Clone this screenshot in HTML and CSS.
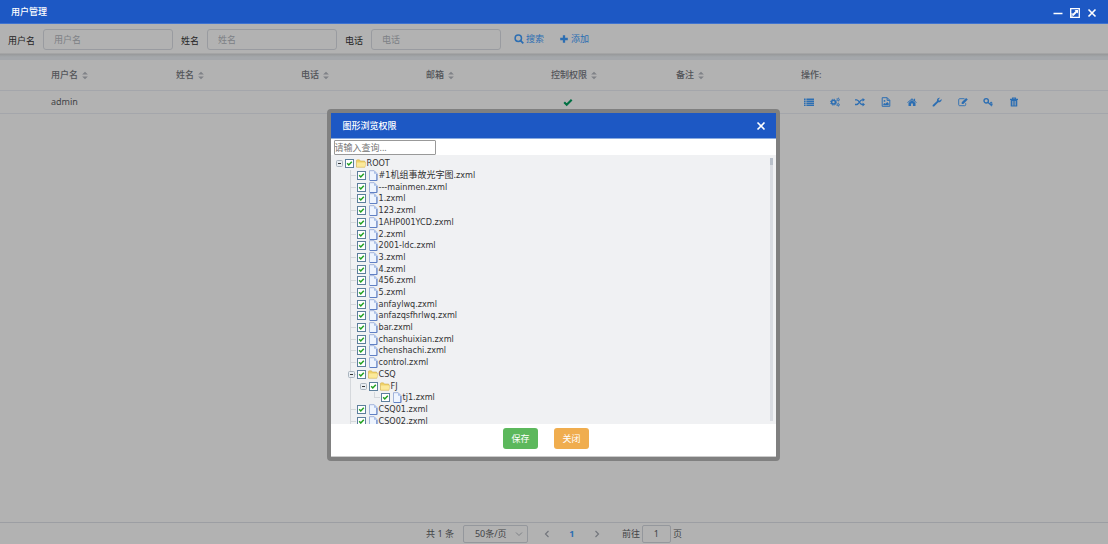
FILE: index.html
```html
<!DOCTYPE html>
<html lang="zh-CN">
<head>
<meta charset="utf-8">
<title>用户管理</title>
<link rel="stylesheet" href="styles.css">
</head>
<body>
<svg class="sprite" aria-hidden="true">
  <symbol id="i-file" viewBox="0 0 10 11"><path d="M1.500.7h4.700l2.800 2.900v6.900H1.500z" fill="#eef4fe" stroke="#8da3d3" stroke-width=".8"/><path d="M8.900 4v6.500H2" fill="none" stroke="#5f7fc4" stroke-width="1"/><path d="M6 .8v3h3z" fill="#a9c0ea"/></symbol>
  <symbol id="i-folder" viewBox="0 0 11 10"><path d="M.5 9V1.800q0-.8.8-.8h2.500l1 1.300h4.700v1.200h.9L9.800 9z" fill="#f0d268" stroke="#d4b252" stroke-width=".7"/><path d="M1 8.500V4h9.500l-.8 4.500z" fill="#fbe99b"/></symbol>
  <symbol id="i-minus" viewBox="0 0 9 9"><rect x="1.500" y="1.500" width="6" height="6" rx="1" fill="#e8edf2" stroke="#a9b4be"/><path d="M3 4.500h3" stroke="#333"/></symbol>
  <symbol id="i-sort" viewBox="0 0 8 10"><path d="M4 .8 7.200 4H.8zM4 9.200 7.200 6H.8z" fill="#b7bac2"/></symbol>
  <symbol id="i-close" viewBox="0 0 10 10"><path d="m1.500 1.500 7 7m0-7-7 7" stroke="currentColor" stroke-width="1.600"/></symbol>
</svg>
<div class="app">
  <header class="titlebar">
    <h1>用户管理</h1>
    <div class="window-actions">
      <button aria-label="最小化"><svg viewBox="0 0 10 10"><path d="M.5 5.500h9" stroke="currentColor" stroke-width="1.500"/></svg></button>
      <button aria-label="最大化"><svg viewBox="0 0 10 10"><path d="M.7.7h8.600v8.600H.7z" fill="none" stroke="currentColor" stroke-width="1.300"/><path d="M4.500 2H8v3.500L6.900 4.400 3.400 7.900 2.100 6.600l3.500-3.500z" fill="currentColor"/><path d="M1 5h2v4H1z" fill="currentColor" opacity=".5"/></svg></button>
      <button aria-label="关闭窗口"><svg><use href="#i-close"/></svg></button>
    </div>
  </header>

  <main class="page">
    <form class="filters">
      <div class="field"><label for="user">用户名</label><input id="user" placeholder="用户名"></div>
      <div class="field"><label for="name">姓名</label><input id="name" placeholder="姓名"></div>
      <div class="field"><label for="phone">电话</label><input id="phone" placeholder="电话"></div>
      <button type="button" class="link"><svg viewBox="0 0 10 10"><circle cx="4.300" cy="4.300" r="3.200" fill="none" stroke="currentColor" stroke-width="1.500"/><path d="m6.600 6.600 2.700 2.700" stroke="currentColor" stroke-width="1.800"/></svg>搜索</button>
      <button type="button" class="link"><svg viewBox="0 0 10 10"><path d="M5 1.200v7.600M1.200 5h7.600" stroke="currentColor" stroke-width="2.300"/></svg>添加</button>
    </form>

    <table class="users">
      <colgroup><col class="c-index"><col class="c-data"><col class="c-data"><col class="c-data"><col class="c-data"><col class="c-data"><col class="c-data"><col></colgroup>
      <thead><tr>
        <th></th>
        <th>用户名<svg class="sort"><use href="#i-sort"/></svg></th>
        <th>姓名<svg class="sort"><use href="#i-sort"/></svg></th>
        <th>电话<svg class="sort"><use href="#i-sort"/></svg></th>
        <th>邮箱<svg class="sort"><use href="#i-sort"/></svg></th>
        <th>控制权限<svg class="sort"><use href="#i-sort"/></svg></th>
        <th>备注<svg class="sort"><use href="#i-sort"/></svg></th>
        <th>操作:</th>
      </tr></thead>
      <tbody><tr>
        <td></td><td>admin</td><td></td><td></td><td></td>
        <td><svg class="granted" viewBox="0 0 10 10"><path d="m1.200 5.200 2.500 2.500 5-5" fill="none" stroke="currentColor" stroke-width="2.100"/></svg></td>
        <td></td>
        <td><div class="actions">
          <button aria-label="列表"><svg viewBox="0 0 10 10"><path d="M0 1.500h1.600V3H0zm2.400 0H10V3H2.400zM0 3.500h1.600V5H0zm2.400 0H10V5H2.400zM0 5.500h1.600V7H0zm2.400 0H10V7H2.400zM0 7.500h1.600V9H0zm2.400 0H10V9H2.400z" fill="currentColor"/></svg></button>
          <button aria-label="设置"><svg viewBox="0 0 10 10" fill="none" stroke="currentColor"><circle cx="3.500" cy="5.200" r="1.900" stroke-width="1.500"/><circle cx="3.500" cy="5.200" r="3" stroke-width="1" stroke-dasharray="1.200 1.156"/><circle cx="8.200" cy="2.600" r="1" stroke-width=".9"/><circle cx="8.200" cy="7.700" r="1" stroke-width=".9"/><circle cx="8.200" cy="2.600" r="1.700" stroke-width=".6" stroke-dasharray=".9 .88"/><circle cx="8.200" cy="7.700" r="1.700" stroke-width=".6" stroke-dasharray=".9 .88"/></svg></button>
          <button aria-label="切换"><svg viewBox="0 0 10 10"><path d="M0 2.800h1.700c2.400 0 3 4.700 5.300 4.700h1M0 7.500h1.700C4.100 7.500 4.700 2.800 7 2.800h1" fill="none" stroke="currentColor" stroke-width="1.300"/><path d="M7.600.9 10 2.800 7.600 4.700zm0 4.700L10 7.500 7.600 9.400z" fill="currentColor"/></svg></button>
          <button aria-label="图形浏览权限"><svg viewBox="0 0 10 10"><path d="M1.200.7h5l2.600 2.600v6H1.200zM6.100.7v2.700h2.700" fill="none" stroke="currentColor"/><path d="M2.300 8.300V7l1.200-1.100.9.900 1.800-1.900 1.500 1.600v1.800z" fill="currentColor"/><circle cx="3.500" cy="3.900" r=".9" fill="currentColor"/></svg></button>
          <button aria-label="主页"><svg viewBox="0 0 10 10"><path d="M5 1.200 6.900 2.900V1.700h1.200v2.200L9.800 5.500l-.5.600L5 2.400.7 6.100l-.5-.6z" fill="currentColor"/><path d="M5 3.100 8.500 6v3H5.900V6.600H4.100V9H1.500V6z" fill="currentColor"/></svg></button>
          <button aria-label="维护"><svg viewBox="0 0 10 10"><path d="M.8 8.100 5 3.900C4.600 1.900 6.300.3 8.200.8L6.600 2.300l.2 1.100 1.100.2 1.600-1.500c.6 1.900-1.200 3.700-3.200 3.200L2.100 9.400C1.200 10.100.1 9 .8 8.100z" fill="currentColor"/></svg></button>
          <button aria-label="编辑"><svg viewBox="0 0 10 10"><path d="M6.500 1.700H1.700q-1 0-1 1v5q0 1 1 1h5q1 0 1-1V6.200" fill="none" stroke="currentColor" stroke-width=".9"/><path d="M3.700 7V5.300L8.100.9l1.700 1.700L5.400 7z" fill="currentColor"/></svg></button>
          <button aria-label="密钥"><svg viewBox="0 0 10 10"><circle cx="3.200" cy="3.800" r="2.200" fill="none" stroke="currentColor" stroke-width="1.400"/><path d="m4.800 5.200 4.300 3.900M6.600 6.900l1.500-1.500 1.100 1M8 8l1.500-1" fill="none" stroke="currentColor" stroke-width="1.200"/></svg></button>
          <button aria-label="删除"><svg viewBox="0 0 10 10"><path d="M3.500 2V1h3v1M1 2.400h8" fill="none" stroke="currentColor" stroke-width="1.100"/><path fill-rule="evenodd" d="M1.700 3h6.600v6q0 .6-.6.600H2.300q-.6 0-.6-.6zm1.500 1.100v4.300h.6V4.100zm1.500 0v4.300h.6V4.100zm1.500 0v4.300h.6V4.100z" fill="currentColor"/></svg></button>
        </div></td>
      </tr></tbody>
    </table>

    <footer class="pager">
      <span>共 1 条</span>
      <span class="size"><select aria-label="每页条数"><option>50条/页</option></select><svg viewBox="0 0 10 10"><path d="m2 3.500 3 3 3-3" fill="none" stroke="#b4b8c0"/></svg></span>
      <nav aria-label="分页">
        <button aria-label="上一页"><svg viewBox="0 0 10 10"><path d="M6.500 2 3.500 5l3 3" fill="none" stroke="#a5a9b2" stroke-width="1.200"/></svg></button>
        <button class="current">1</button>
        <button aria-label="下一页"><svg viewBox="0 0 10 10"><path d="m3.500 2 3 3-3 3" fill="none" stroke="#a5a9b2" stroke-width="1.200"/></svg></button>
      </nav>
      <label class="jump">前往<input value="1">页</label>
    </footer>

    <div class="overlay">
      <section class="dialog" role="dialog" aria-labelledby="dialog-title">
        <header><h2 id="dialog-title">图形浏览权限</h2><button aria-label="关闭对话框"><svg><use href="#i-close"/></svg></button></header>
        <div class="search"><input aria-label="查询" placeholder="请输入查询..."></div>
        <div class="tree-wrap">
          <ul class="tree">
            <li><button aria-label="折叠"><svg><use href="#i-minus"/></svg></button><label><input type="checkbox" checked><svg><use href="#i-folder"/></svg>ROOT</label></li>
            <li class="l1"><label><input type="checkbox" checked><svg><use href="#i-file"/></svg>#1机组事故光字图.zxml</label></li>
            <li class="l1"><label><input type="checkbox" checked><svg><use href="#i-file"/></svg>---mainmen.zxml</label></li>
            <li class="l1"><label><input type="checkbox" checked><svg><use href="#i-file"/></svg>1.zxml</label></li>
            <li class="l1"><label><input type="checkbox" checked><svg><use href="#i-file"/></svg>123.zxml</label></li>
            <li class="l1"><label><input type="checkbox" checked><svg><use href="#i-file"/></svg>1AHP001YCD.zxml</label></li>
            <li class="l1"><label><input type="checkbox" checked><svg><use href="#i-file"/></svg>2.zxml</label></li>
            <li class="l1"><label><input type="checkbox" checked><svg><use href="#i-file"/></svg>2001-ldc.zxml</label></li>
            <li class="l1"><label><input type="checkbox" checked><svg><use href="#i-file"/></svg>3.zxml</label></li>
            <li class="l1"><label><input type="checkbox" checked><svg><use href="#i-file"/></svg>4.zxml</label></li>
            <li class="l1"><label><input type="checkbox" checked><svg><use href="#i-file"/></svg>456.zxml</label></li>
            <li class="l1"><label><input type="checkbox" checked><svg><use href="#i-file"/></svg>5.zxml</label></li>
            <li class="l1"><label><input type="checkbox" checked><svg><use href="#i-file"/></svg>anfaylwq.zxml</label></li>
            <li class="l1"><label><input type="checkbox" checked><svg><use href="#i-file"/></svg>anfazqsfhrlwq.zxml</label></li>
            <li class="l1"><label><input type="checkbox" checked><svg><use href="#i-file"/></svg>bar.zxml</label></li>
            <li class="l1"><label><input type="checkbox" checked><svg><use href="#i-file"/></svg>chanshuixian.zxml</label></li>
            <li class="l1"><label><input type="checkbox" checked><svg><use href="#i-file"/></svg>chenshachi.zxml</label></li>
            <li class="l1"><label><input type="checkbox" checked><svg><use href="#i-file"/></svg>control.zxml</label></li>
            <li class="l1"><button aria-label="折叠"><svg><use href="#i-minus"/></svg></button><label><input type="checkbox" checked><svg><use href="#i-folder"/></svg>CSQ</label></li>
            <li class="l2"><button aria-label="折叠"><svg><use href="#i-minus"/></svg></button><label><input type="checkbox" checked><svg><use href="#i-folder"/></svg>FJ</label></li>
            <li class="l3"><label><input type="checkbox" checked><svg><use href="#i-file"/></svg>tj1.zxml</label></li>
            <li class="l1"><label><input type="checkbox" checked><svg><use href="#i-file"/></svg>CSQ01.zxml</label></li>
            <li class="l1"><label><input type="checkbox" checked><svg><use href="#i-file"/></svg>CSQ02.zxml</label></li>
          </ul>
          <div class="scrollbar"></div>
        </div>
        <footer><button class="save">保存</button><button class="cancel">关闭</button></footer>
      </section>
    </div>
  </main>
</div>
</body>
</html>
```
FILE: styles.css
```css
* { box-sizing: border-box; }
body {
  margin: 0;
  font: 9px/12px "Noto Sans", "Noto Sans CJK SC", sans-serif;
  color: #606266;
}
button, input, select { font: inherit; color: inherit; }
button { padding: 0; border: 0; background: none; cursor: pointer; }
svg { display: block; width: 10px; height: 10px; flex: none; }
h1, h2 { margin: 0; font-size: 9px; line-height: 12px; font-weight: 500; }
.sprite { display: none; }

.app { display: flex; flex-direction: column; height: 100vh; }
.titlebar {
  display: flex; align-items: center; justify-content: space-between;
  height: 24px; padding: 0 11px; flex: none;
  background: #1d58c4; color: #fff; border-bottom: 1px solid #3f73d0;
}
.window-actions { display: flex; align-items: center; gap: 7px; padding-top: 2px; }
.page { display: flex; flex-direction: column; flex: 1; min-height: 0; position: relative; background: #fff; }

.filters {
  display: flex; align-items: center; height: 36px; flex: none;
  padding: 0 8px 6px;
  background: linear-gradient(#fff 29px, #d8dadc 30px, #ebf0f5 33px);
}
.field { display: flex; align-items: center; gap: 8px; margin-right: 8px; }
.field label { color: #333; padding-top: 3px; }
.field input {
  width: 130px; height: 21px; padding: 0 10px;
  border: 1px solid #dcdfe6; border-radius: 3px; background: #fff;
}
.field input::placeholder { color: #b4b8c0; opacity: 1; }
.link { display: flex; align-items: center; gap: 2px; margin-left: 5px; margin-right: 10px; color: #409eff; }

.users { width: 100%; table-layout: fixed; border-collapse: collapse; }
.c-index { width: 43px; }
.c-data { width: 125px; }
.users th, .users td { padding: 0 8px; border-bottom: 1px solid #ebeef5; text-align: left; font-weight: 400; }
.users th { height: 30px; color: #76797f; font-weight: 500; }
.users td { height: 23px; }
.sort { display: inline-block; width: 8px; height: 9px; margin-left: 3px; vertical-align: middle; }
.granted { margin-left: 12px; color: #00a060; }
.actions { display: flex; justify-content: space-between; width: 215px; margin-left: 3px; color: #409eff; }

.pager {
  display: flex; align-items: center; justify-content: center;
  height: 22px; margin-top: auto; flex: none; border-top: 1px solid #e0e3ea;
}
.size { display: flex; align-items: center; margin-left: 9px; }
.size select {
  width: 65px; height: 18px; padding: 0 11px; appearance: none;
  border: 1px solid #d4d8e0; border-radius: 2px; background: #fff;
}
.size svg { margin-left: -14px; margin-right: 4px; pointer-events: none; }
.pager nav { display: flex; align-items: center; gap: 15px; margin: 0 20px 0 14px; }
.pager nav button { width: 10px; }
.pager .current { color: #409eff; font-weight: 700; }
.jump { display: flex; align-items: center; gap: 2px; }
.jump input {
  width: 29px; height: 18px; padding: 0; text-align: center;
  border: 1px solid #d4d8e0; border-radius: 2px; background: #fff;
}

.overlay {
  position: absolute; inset: 0;
  display: flex; align-items: center; justify-content: center;
  padding: 2px 2px 0 0; background: rgba(0, 0, 0, .3);
}
.dialog {
  width: 453px; border: 4px solid #808080; border-radius: 4px;
  background: #fff; color: #333;
}
.dialog header {
  display: flex; align-items: center; justify-content: space-between;
  height: 26px; padding: 0 10px 0 12px;
  background: #1d58c4; color: #fff; border-bottom: 1px solid #8babdf;
}
.search { height: 16px; padding: 1px 3px 0; }
.search input { display: block; width: 102px; height: 15px; padding: 0; border: 1px solid #999; border-radius: 1px; }
.search input::placeholder { color: #757575; }
.tree-wrap {
  display: flex; justify-content: space-between; height: 269px; overflow: hidden;
  padding: 3px 3px 0 2px; background: #f0f1f3;
}
/* Rows share the list height evenly. */
.tree {
  display: grid; grid-auto-rows: 1fr; flex: 1; height: 269px;
  margin: 0; padding: 0; list-style: none;
  font-family: "DejaVu Sans Condensed", "Noto Sans CJK SC", sans-serif;
}
.tree li { display: flex; align-items: center; padding-left: 12px; min-height: 0; }
.tree .l1, .tree .l2, .tree .l3 {
  padding-left: 24px;
  background: linear-gradient(#d5d8dc, #d5d8dc) 17px 0 / 1px 100% no-repeat,
    linear-gradient(#d5d8dc, #d5d8dc) 17px 50% / 6px 1px no-repeat;
}
.tree .l2, .tree .l3 { background: linear-gradient(#d5d8dc, #d5d8dc) 17px 0 / 1px 100% no-repeat; }
.tree .l2 { padding-left: 36px; }
.tree .l3 {
  padding-left: 48px;
  background: linear-gradient(#d5d8dc, #d5d8dc) 17px 0 / 1px 100% no-repeat,
    linear-gradient(#d5d8dc, #d5d8dc) 41px 0 / 1px 50% no-repeat,
    linear-gradient(#d5d8dc, #d5d8dc) 41px 50% / 6px 1px no-repeat;
}
.tree button { width: 12px; margin-left: -12px; padding-left: 2px; }
.tree button svg { width: 9px; height: 9px; }
.tree label { display: flex; align-items: center; line-height: 11px; white-space: nowrap; }
.tree label svg { height: 11px; margin: 0 1px 0 2px; }
.tree input {
  appearance: none; width: 9px; height: 9px; margin: 0; border: 1px solid #5d7f9c;
  background: #fff url("data:image/svg+xml,%3Csvg xmlns='http://www.w3.org/2000/svg' viewBox='0 0 7 7'%3E%3Cpath d='M1.200 3.200 2.800 5 5.800 1.800' fill='none' stroke='%2321a121' stroke-width='1.500'/%3E%3C/svg%3E");
}
.scrollbar { width: 3px; height: 263px; background: linear-gradient(#b9c0ca 7px, #d9dce2 7px); }
.dialog footer { display: flex; justify-content: center; gap: 16px; height: 33px; padding: 4px 14px 7px 0; border-bottom: 1px solid #ccc; }
.dialog footer button { width: 35px; border-radius: 3px; color: #fff; }
.save { background: #5cb85c; }
.cancel { background: #f0ad4e; }
```
